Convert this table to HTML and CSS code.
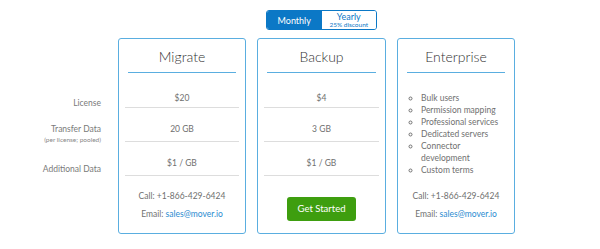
FILE: index.html
```html
<!DOCTYPE html>
<html lang="en">
<head>
    <meta charset="UTF-8">
    <meta name="viewport" content="width=device-width, initial-scale=1.0">
    <title>Pricing</title>
    <link rel="stylesheet" href="styles.css">
</head>
<body>
    <div class="toggle">
        <button class="toggle-btn active">Monthly</button>
        <button class="toggle-btn">
            <span class="yearly">Yearly</span>
            <span class="discount">25% discount</span>
        </button>
    </div>

    <div class="pricing">
        <!-- Row labels -->
        <div class="labels">
            <div class="label first">License</div>
            <div class="label">Transfer Data<small>(per license; pooled)</small></div>
            <div class="label last">Additional Data</div>
        </div>

        <div class="card">
            <h2 class="card-title">Migrate</h2>
            <div class="row first">$20</div>
            <div class="row">20 GB</div>
            <div class="row">$1 / GB</div>
            <div class="contact">
                <p>Call: +1-866-429-6424</p>
                <p>Email: <a href="#">sales@mover.io</a></p>
            </div>
        </div>

        <div class="card">
            <h2 class="card-title">Backup</h2>
            <div class="row first">$4</div>
            <div class="row">3 GB</div>
            <div class="row">$1 / GB</div>
            <div class="cta">
                <a href="#" class="start-button">Get Started</a>
            </div>
        </div>

        <div class="card">
            <h2 class="card-title">Enterprise</h2>
            <ul class="features">
                <li>Bulk users</li>
                <li>Permission mapping</li>
                <li>Professional services</li>
                <li>Dedicated servers</li>
                <li>Connector development</li>
                <li>Custom terms</li>
            </ul>
            <div class="contact">
                <p>Call: +1-866-429-6424</p>
                <p>Email: <a href="#">sales@mover.io</a></p>
            </div>
        </div>
    </div>
</body>
</html>
```

FILE: styles.css
```css
body {
    font-family: Lato, 'Open Sans', sans-serif;
    margin: 0;
    padding-top: 10px;
    background: #ffffff;
    color: #707070;
}
.toggle {
    display: flex;
    width: 111px;
    height: 20px;
    margin-left: 266px;
    box-sizing: border-box;
    border: 1px solid #0b78c6;
    border-radius: 3px;
    overflow: hidden;
}
.toggle-btn {
    flex: 1;
    display: flex;
    flex-direction: column;
    align-items: center;
    justify-content: center;
    border: none;
    padding: 0;
    margin: 0;
    background: #ffffff;
    font-family: inherit;
    font-size: 9px;
    color: #0b78c6;
    line-height: 1;
}
.toggle-btn.active {
    background: #0b78c6;
    color: #ffffff;
}
.yearly {
    font-size: 9px;
    line-height: 9px;
}
.discount {
    font-size: 6.5px;
    line-height: 8px;
}
.pricing {
    display: grid;
    grid-template-columns: 107px 128px 129px 118px;
    column-gap: 11px;
    margin-top: 8px;
}
.labels {
    padding-top: 36px;
    padding-right: 6px;
    text-align: right;
    font-size: 8.5px;
    color: #7a7a7a;
}
.label {
    height: 34px;
    padding-top: 16px;
    box-sizing: border-box;
    line-height: 12px;
}
.label.first {
    height: 33px;
    padding-top: 23px;
}
.label.last {
    padding-top: 22px;
}
.label small {
    display: block;
    font-size: 6.5px;
    line-height: 10px;
    color: #888888;
}
.card {
    min-height: 196px;
    box-sizing: border-box;
    border: 1px solid #5aaee0;
    border-radius: 3px;
    padding: 0 6px 10px;
    display: flex;
    flex-direction: column;
    text-align: center;
    font-size: 8.5px;
}
.card-title {
    margin: 0 3px;
    height: 34px;
    padding-top: 10px;
    box-sizing: border-box;
    font-size: 14px;
    font-weight: 300;
    line-height: 16px;
    color: #333333;
    border-bottom: 1.5px solid #5aaee0;
}
.row {
    height: 34px;
    padding-top: 15px;
    box-sizing: border-box;
    line-height: 12px;
    border-bottom: 1px solid #dddddd;
}
.row.first {
    height: 35px;
    padding-top: 19px;
}
.contact {
    margin-top: auto;
}
.contact p {
    margin: 0;
    line-height: 18px;
}
.contact a {
    color: #2a8bd0;
    text-decoration: none;
}
.cta {
    margin-top: auto;
    margin-bottom: 2px;
}
.start-button {
    display: inline-block;
    width: 69px;
    height: 24px;
    line-height: 24px;
    background: #3e9e0f;
    color: #ffffff;
    text-decoration: none;
    border-radius: 3px;
    font-size: 9.5px;
}
.features {
    margin: 19px 0 0;
    padding-left: 17px;
    text-align: left;
    list-style: circle;
    line-height: 12px;
}
.features li {
    margin-right: 2px;
}
```
